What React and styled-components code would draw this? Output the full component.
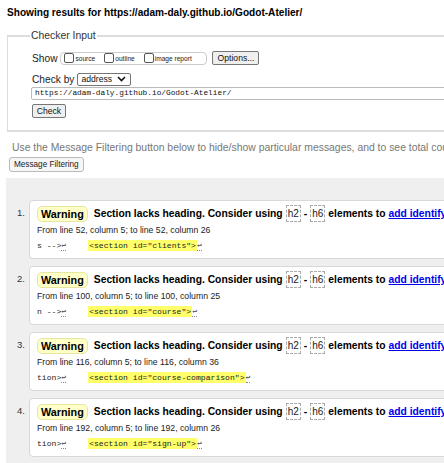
import React from "react";
import styled, { createGlobalStyle } from "styled-components";

const results = [
    { line: 52, from: 5, to: 26, pre: "s -->", code: '<section id="clients">' },
    { line: 100, from: 5, to: 25, pre: "n -->", code: '<section id="course">' },
    { line: 116, from: 5, to: 36, pre: "tion>", code: '<section id="course-comparison">' },
    { line: 192, from: 5, to: 26, pre: "tion>", code: '<section id="sign-up">' },
];

function Chevron() {
    return (
        <svg width="9" height="6" viewBox="0 0 9 6">
            <path d="M1 1 L4.5 4.5 L8 1" fill="none" stroke="#111" strokeWidth="1.6" />
        </svg>
    );
}

function Return() {
    return <ReturnMark>↩</ReturnMark>;
}

function App() {
    return (
        <Page>
            <GlobalStyle />
            <Title>Showing results for https://adam-daly.github.io/Godot-Atelier/</Title>

            <Fieldset>
                <Legend>Checker Input</Legend>
                <FormRow>
                    <Label>Show</Label>
                    <OptionGroup>
                        <CheckItem><Box />source</CheckItem>
                        <CheckItem><Box />outline</CheckItem>
                        <CheckItem><Box />image report</CheckItem>
                    </OptionGroup>
                    <Button>Options...</Button>
                </FormRow>
                <FormRow marginTop={7}>
                    <Label>Check by</Label>
                    <Select>address <Chevron /></Select>
                </FormRow>
                <UrlInput>https://adam-daly.github.io/Godot-Atelier/</UrlInput>
                <Button marginTop={4} wide={34}>Check</Button>
            </Fieldset>

            <Intro>Use the Message Filtering button below to hide/show particular messages, and to see total counts of errors and warnings.</Intro>
            <FilterButton>Message Filtering</FilterButton>

            <ResultsPanel>
                {results.map((r, i) => (
                    <ResultRow key={i}>
                        <Ordinal>{i + 1}.</Ordinal>
                        <Card>
                            <Heading>
                                <Badge>Warning</Badge>
                                <span>Section lacks heading. Consider using</span>
                                <Tag>h2</Tag>-<Tag>h6</Tag>
                                <span>elements to</span>
                                <Link>add identifying headings to all sections.</Link>
                            </Heading>
                            <Location>
                                From line {r.line}, column {r.from}; to line {r.line}, column {r.to}
                            </Location>
                            <Extract>
                                <span>{r.pre}</span><Return />
                                <Highlight>{r.code}</Highlight><Return />
                            </Extract>
                        </Card>
                    </ResultRow>
                ))}
            </ResultsPanel>
        </Page>
    );
}

const GlobalStyle = createGlobalStyle`
    html, body {
        margin: 0;
        background: #fff;
        overflow: hidden;
    }
    body {
        font-family: "Liberation Sans", Arial, sans-serif;
        color: #000;
    }
`

const Page = styled.div`
    width: 900px;
    padding: 6px 0 0 7px;
`

const Title = styled.h2`
    margin: 0;
    font-size: 10.1px;
    line-height: 14px;
    font-weight: bold;
`

const Fieldset = styled.fieldset`
    margin: 10px 0 0 0;
    padding: 10px 0 12px 24px;
    border: 1px solid #ddd;
    border-top-width: 2px;
    border-bottom-width: 2px;
    height: 76px;
`

const Legend = styled.legend`
    margin-left: -2px;
    padding: 0 1px;
    font-size: 10.4px;
    color: #333;
`

const FormRow = styled.div`
    display: flex;
    align-items: center;
    gap: 3px;
    margin-top: ${props => props.marginTop ? `${props.marginTop}px` : "0"};
    height: 14px;
`

const Label = styled.span`
    font-size: 10.2px;
    color: #222;
`

const OptionGroup = styled.div`
    display: flex;
    align-items: center;
    gap: 9px;
    height: 11px;
    padding: 0 3px;
    border: 1px solid #ccc;
    border-radius: 4px;
    width: 139px;
    box-sizing: content-box;
`

const CheckItem = styled.label`
    display: flex;
    align-items: center;
    gap: 1px;
    font-size: 6.6px;
    color: #222;
`

const Box = styled.span`
    display: inline-block;
    width: 8px;
    height: 8px;
    border: 1px solid #555;
    border-radius: 2px;
    background: #fff;
`

const Button = styled.div`
    display: inline-flex;
    align-items: center;
    justify-content: center;
    box-sizing: border-box;
    width: ${props => props.wide ? `${props.wide}px` : "47px"};
    height: 14px;
    margin-top: ${props => props.marginTop ? `${props.marginTop}px` : "0"};
    margin-left: ${props => props.wide ? "0" : "2px"};
    border: 1px solid #767676;
    border-radius: 2px;
    background: #efefef;
    font-size: 8.6px;
    color: #111;
`

const Select = styled.div`
    display: flex;
    align-items: center;
    justify-content: space-between;
    box-sizing: border-box;
    width: 54px;
    height: 13px;
    padding: 0 4px 0 3px;
    border: 1px solid #767676;
    border-radius: 2px;
    font-size: 8.6px;
    color: #111;
`

const UrlInput = styled.div`
    margin-top: 1px;
    margin-left: -1px;
    height: 13px;
    box-sizing: border-box;
    padding-left: 3px;
    border: 1px solid #bbb;
    border-radius: 2px;
    font-family: "Liberation Mono", monospace;
    font-size: 7.8px;
    line-height: 11px;
    color: #111;
`

const Intro = styled.p`
    margin: 10px 0 0 5px;
    font-size: 10.4px;
    color: #777;
    white-space: nowrap;
`

const FilterButton = styled.div`
    display: inline-flex;
    align-items: center;
    margin: 3px 0 0 2px;
    height: 13px;
    padding: 0 4px;
    border: 1px solid #bbb;
    border-radius: 3px;
    background: #f6f6f6;
    font-size: 8.2px;
    color: #222;
`

const ResultsPanel = styled.div`
    margin: 6px 0 0 -1px;
    padding: 22px 0 8px 0;
    background: #efefef;
    display: flex;
    flex-direction: column;
    gap: 7px;
`

const ResultRow = styled.div`
    display: flex;
    align-items: flex-start;
`

const Ordinal = styled.div`
    width: 19px;
    padding: 7px 4px 0 0;
    text-align: right;
    font-size: 9.5px;
    color: #333;
    box-sizing: content-box;
`

const Card = styled.div`
    flex: 1;
    height: 59px;
    padding: 4px 0 0 7px;
    box-sizing: border-box;
    background: #fff;
    border: 1px solid #d8d8d8;
    border-radius: 4px;
`

const Heading = styled.div`
    display: flex;
    align-items: center;
    gap: 3px;
    font-size: 10.3px;
    font-weight: bold;
    white-space: nowrap;
    height: 17px;
`

const Badge = styled.span`
    padding: 1px 3px;
    margin-right: 3px;
    background: #ffffc8;
    border: 1px solid #e6e6a0;
    border-radius: 5px;
    font-size: 10.8px;
`

const Tag = styled.span`
    font-weight: normal;
    font-size: 10px;
    padding: 2px 1px;
    border: 1px dashed #aaa;
    color: #222;
`

const Link = styled.a`
    color: #0000ee;
    text-decoration: underline;
    cursor: pointer;
`

const Location = styled.div`
    margin-top: 3px;
    font-size: 8.7px;
    color: #222;
`

const Extract = styled.div`
    margin-top: 5px;
    display: flex;
    align-items: center;
    font-family: "Liberation Mono", monospace;
    font-size: 8.1px;
    color: #222;
    white-space: pre;
`

const ReturnMark = styled.span`
    font-size: 8px;
    margin-right: 22px;
    border-bottom: 1px dotted #888;
    line-height: 9px;
    color: #444;
`

const Highlight = styled.span`
    background: #ffff6a;
    padding: 1px 1px;
`

export default App;
